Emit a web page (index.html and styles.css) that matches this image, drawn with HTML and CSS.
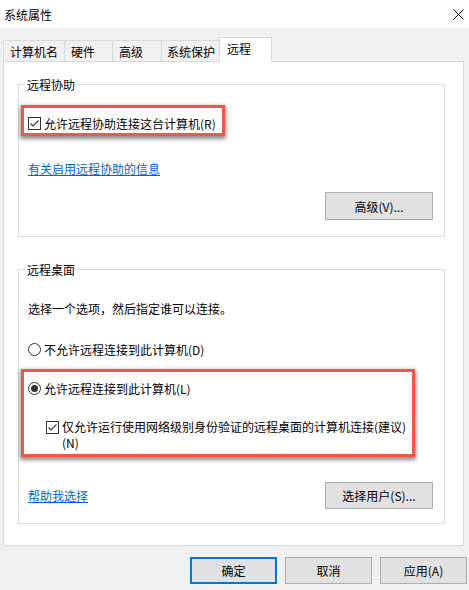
FILE: index.html
```html
<!DOCTYPE html>
<html lang="zh-CN">
<head>
<meta charset="utf-8">
<title>系统属性</title>
<link rel="stylesheet" href="styles.css">
</head>
<body>
<div class="titlebar">
  <span class="title">系统属性</span>
  <svg class="close" width="11" height="11" viewBox="0 0 11 11"><path d="M0.5 0.5L10.5 10.5M10.5 0.5L0.5 10.5" stroke="#000" stroke-width="1" fill="none"/></svg>
</div>
<div class="tabs">
  <div class="tab t1">计算机名</div>
  <div class="tab t2">硬件</div>
  <div class="tab t3">高级</div>
  <div class="tab t4">系统保护</div>
  <div class="tab active">远程</div>
</div>
<div class="panel">
  <fieldset class="group g1">
    <legend>远程协助</legend>
    <div class="hl hl1">
      <label class="opt">
        <span class="check"><svg width="13" height="13" viewBox="0 0 13 13"><path d="M2.5 6.5L5 9L10.5 3.5" stroke="#333" stroke-width="1.1" fill="none"/></svg></span>
        <span>允许远程协助连接这台计算机(R)</span>
      </label>
    </div>
    <a class="link info" href="#">有关启用远程协助的信息</a>
    <div class="btnrow"><button class="btn wide tall">高级(V)...</button></div>
  </fieldset>

  <fieldset class="group g2">
    <legend>远程桌面</legend>
    <p class="intro">选择一个选项，然后指定谁可以连接。</p>
    <label class="opt r1">
      <span class="radio"></span>
      <span>不允许远程连接到此计算机(D)</span>
    </label>
    <div class="hl hl2">
      <label class="opt">
        <span class="radio on"></span>
        <span>允许远程连接到此计算机(L)</span>
      </label>
      <label class="opt sub">
        <span class="check"><svg width="13" height="13" viewBox="0 0 13 13"><path d="M2.5 6.5L5 9L10.5 3.5" stroke="#333" stroke-width="1.1" fill="none"/></svg></span>
        <span class="subtext">仅允许运行使用网络级别身份验证的远程桌面的计算机连接(建议)<br>(N)</span>
      </label>
    </div>
    <div class="btnrow between">
      <a class="link" href="#">帮助我选择</a>
      <button class="btn wide">选择用户(S)...</button>
    </div>
  </fieldset>
</div>
<div class="footer">
  <button class="btn foot default">确定</button>
  <button class="btn foot">取消</button>
  <button class="btn foot">应用(A)</button>
</div>
</body>
</html>
```
FILE: styles.css
```css
* { box-sizing: border-box; }
html, body { margin: 0; }
body {
  width: 469px;
  height: 590px;
  overflow: hidden;
  background: #f0f0f0;
  color: #000;
  font-family: "Noto Sans CJK SC", "Microsoft YaHei", sans-serif;
  font-size: 12px;
  line-height: 17px;
}
.titlebar {
  height: 28px;
  background: #fff;
  display: flex;
  align-items: center;
  justify-content: space-between;
  padding: 0 5px 0 4px;
}
.close { display: block; }

.tabs {
  display: flex;
  align-items: flex-end;
  height: 24px;
  margin-top: 9px;
  padding-left: 3px;
}
.tab {
  height: 21px;
  border: 1px solid #d9d9d9;
  border-bottom: none;
  background: #f0f0f0;
  margin-right: -1px;
  padding-left: 6px;
  display: flex;
  align-items: center;
  white-space: nowrap;
}
.t1 { width: 62px; }
.t2 { width: 49px; }
.t3 { width: 50px; }
.t4 { width: 61px; padding-left: 5px; }
.tab.active {
  position: relative;
  z-index: 2;
  height: 25px;
  width: 53px;
  margin-left: -2px;
  margin-bottom: -1px;
  background: #fff;
  padding-left: 7px;
  padding-bottom: 3px;
}

.panel {
  position: relative;
  z-index: 1;
  margin-left: 3px;
  width: 461px;
  height: 485px;
  background: #fff;
  border: 1px solid #d9d9d9;
  padding: 14px 18px 0 14px;
}
.group {
  margin: 0;
  min-width: 0;
  border: 1px solid #dcdcdc;
  padding: 0 11px 16px 9px;
}
.group legend {
  padding: 0 2px;
  margin-left: -3px;
  line-height: 17px;
}
.g2 { margin-top: 24px; padding-bottom: 14px; }

.opt {
  display: flex;
  align-items: center;
  gap: 3px;
  white-space: nowrap;
}
.check {
  width: 13px;
  height: 13px;
  border: 1px solid #333;
  background: #fff;
  display: block;
  flex: none;
}
.check svg { display: block; margin: -1px; }
.radio {
  width: 13px;
  height: 13px;
  border: 1px solid #333;
  border-radius: 50%;
  background: #fff;
  display: flex;
  align-items: center;
  justify-content: center;
  flex: none;
}
.radio.on::after {
  content: "";
  width: 7px;
  height: 7px;
  border-radius: 50%;
  background: #333;
}

.hl {
  border: 3px solid #f05747;
  box-shadow: 0 2px 4px 1px rgba(0, 0, 0, 0.45);
  margin-left: -7px;
}
.hl1 {
  margin-top: 12px;
  width: fit-content;
  padding: 7px 6px 1px 4px;
}
.hl2 {
  margin-top: 11px;
  width: 394px;
  padding: 8px 4px 3px 4px;
}

.link {
  color: #0066cc;
  text-decoration: underline;
  display: block;
  width: fit-content;
}
.info { margin-top: 24px; }

.btnrow {
  display: flex;
  justify-content: flex-end;
  align-items: center;
  margin-top: 15px;
}
.btnrow.between { justify-content: space-between; margin-top: 25px; }

.btn {
  font: inherit;
  color: #000;
  background: #e1e1e1;
  border: 1px solid #adadad;
  height: 27px;
  padding: 0;
  margin: 0;
  border-radius: 0;
}
.btn.wide { width: 108px; }
.btn.tall { height: 28px; }

.intro { margin: 22px 0 0; }
.r1 { margin-top: 24px; }

.sub {
  align-items: flex-start;
  margin-top: 22px;
  margin-left: 18px;
  white-space: normal;
}
.sub .check { margin-top: 2px; }
.subtext { line-height: 16px; }

.footer {
  display: flex;
  justify-content: flex-end;
  gap: 8px;
  margin-top: 11px;
  padding-right: 2px;
}
.btn.foot { width: 87px; }
.btn.default { border: 2px solid #0078d7; }
```
